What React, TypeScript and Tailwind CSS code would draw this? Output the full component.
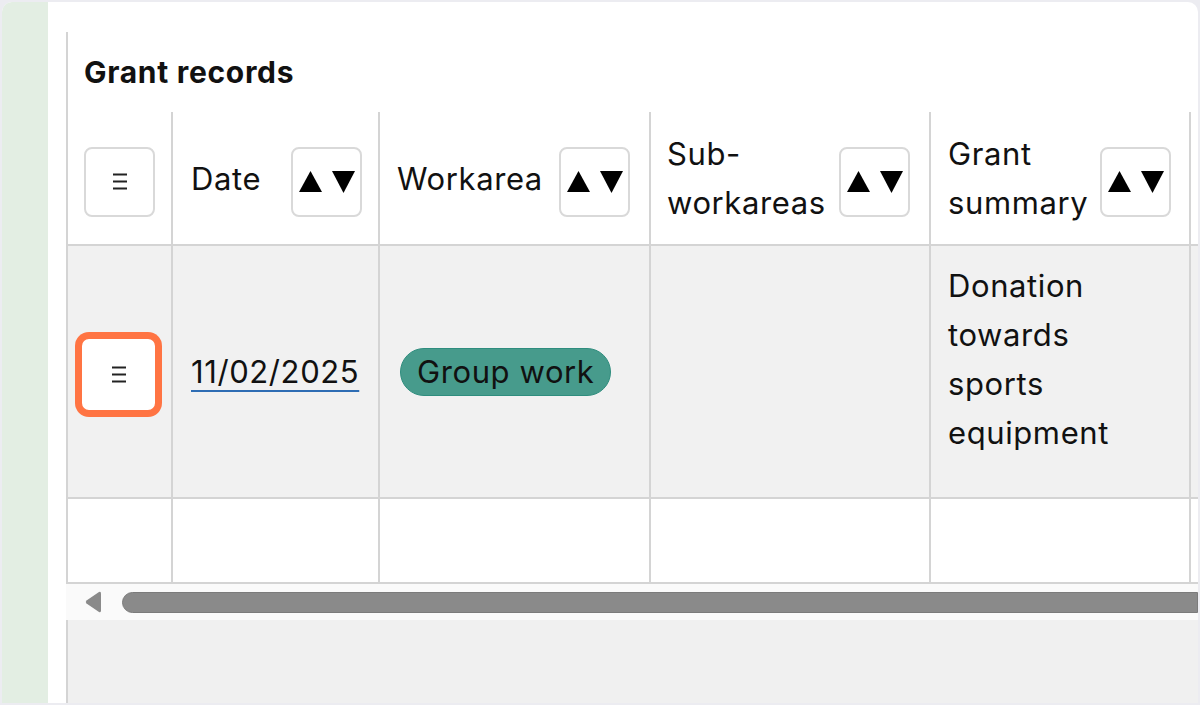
import React from 'react';

// Sort toggle: filled up/down triangles inside a bordered square
function SortButton() {
  return (
    <button
      type="button"
      className="mt-[7px] flex h-[70px] w-[71px] shrink-0 items-center justify-center rounded-[8px] border-2 border-[#d9d9d9] bg-white"
    >
      <svg width="56" height="22" viewBox="0 0 56 22" fill="#000">
        <polygon points="0,21 11.5,0 23,21" />
        <polygon points="33,0 56,0 44.5,22" />
      </svg>
    </button>
  );
}

function MenuGlyph() {
  return (
    <svg width="16" height="17" viewBox="0 0 16 17" stroke="#222" strokeWidth="2">
      <line x1="1" y1="1.5" x2="15" y2="1.5" />
      <line x1="1" y1="8.5" x2="15" y2="8.5" />
      <line x1="1" y1="15.5" x2="15" y2="15.5" />
    </svg>
  );
}

const cols = ['w-[107px] border-l-2', 'w-[207px]', 'w-[271px]', 'w-[280px]', 'w-[260px]', 'w-[260px]'];

function HeaderCell({ label, width, pad }: { label: string; width: string; pad: string }) {
  return (
    <div className={`${width} ${pad} flex shrink-0 items-center justify-between gap-[10px] border-r-2 border-[#d4d4d4]`}>
      <span className="leading-[49px]">{label}</span>
      <SortButton />
    </div>
  );
}

export default function App() {
  return (
    <div
      className="h-[705px] w-[1200px] overflow-hidden bg-[#ececf1] pl-[2px] pr-[2px] pt-[2px] pb-[2px] text-[31px] tracking-[0.6px] text-[#111]"
      style={{ fontFamily: 'Inter, "Noto Sans", sans-serif' }}
    >
      <div className="flex h-full overflow-hidden rounded-t-[10px] bg-white">
        {/* left rail */}
        <div className="w-[46px] shrink-0 bg-[#e3eee3]" />

        <div className="flex min-w-0 flex-1 flex-col pl-[18px] pt-[30px]">
          <div className="flex h-[80px] shrink-0 items-center border-l-2 border-[#d4d4d4] pl-[16px]">
            <h2 className="text-[30px] font-bold tracking-[0.7px]">Grant records</h2>
          </div>

          <div className="shrink-0 overflow-hidden">
            {/* header row */}
            <div className="flex h-[134px] w-max border-b-2 border-[#d4d4d4] bg-white">
              <div className={`${cols[0]} flex shrink-0 items-center justify-center border-r-2 border-[#d4d4d4]`}>
                <button
                  type="button"
                  className="mt-[7px] flex h-[70px] w-[71px] items-center justify-center rounded-[8px] border-2 border-[#d9d9d9] bg-white"
                >
                  <MenuGlyph />
                </button>
              </div>
              <HeaderCell label="Date" width={cols[1]} pad="pl-[18px] pr-[16px]" />
              <HeaderCell label="Workarea" width={cols[2]} pad="pl-[17px] pr-[19px]" />
              <HeaderCell label="Sub-workareas" width={cols[3]} pad="pl-[16px] pr-[19px]" />
              <HeaderCell label="Grant summary" width={cols[4]} pad="pl-[17px] pr-[18px]" />
              <div className={`${cols[5]} shrink-0 border-r-2 border-[#d4d4d4]`} />
            </div>

            {/* data row */}
            <div className="flex h-[253px] w-max border-b-2 border-[#d4d4d4] bg-[#f1f1f1]">
              <div className={`${cols[0]} flex shrink-0 items-center justify-center border-r-2 border-[#d4d4d4] pr-[2px]`}>
                <button
                  type="button"
                  className="mt-[6px] flex h-[75px] w-[77px] items-center justify-center rounded-[9px] border-2 border-[#ff7443] bg-white shadow-[0_0_0_5px_#ff7443]"
                >
                  <MenuGlyph />
                </button>
              </div>
              <div className={`${cols[1]} flex shrink-0 items-center border-r-2 border-[#d4d4d4] pl-[18px]`}>
                <a className="leading-[49px] underline decoration-[#2e6db4] decoration-[1.5px] underline-offset-[7px]">
                  11/02/2025
                </a>
              </div>
              <div className={`${cols[2]} flex shrink-0 items-center border-r-2 border-[#d4d4d4] pl-[20px]`}>
                <span className="flex h-[48px] items-center rounded-full border border-[#2f8d7e] bg-[#479b8c] px-[16px] leading-none">
                  Group work
                </span>
              </div>
              <div className={`${cols[3]} shrink-0 border-r-2 border-[#d4d4d4]`} />
              <div className={`${cols[4]} shrink-0 border-r-2 border-[#d4d4d4] pl-[17px] pr-[40px] pt-[15px] leading-[49px]`}>
                Donation towards sports equipment
              </div>
              <div className={`${cols[5]} shrink-0 border-r-2 border-[#d4d4d4]`} />
            </div>

            {/* empty row */}
            <div className="flex h-[85px] w-max border-b-2 border-[#d4d4d4] bg-white">
              {cols.map((c, i) => (
                <div key={i} className={`${c} shrink-0 border-r-2 border-[#d4d4d4]`} />
              ))}
            </div>
          </div>

          {/* horizontal scrollbar */}
          <div className="flex h-[36px] shrink-0 items-center bg-[#fafafa] pl-[19px]">
            <svg width="17" height="22" viewBox="0 0 17 22" className="shrink-0">
              <path d="M1.5 9.6 L14 1 Q16 0 16 2.5 L16 19.5 Q16 22 14 21 L1.5 12.4 Q0 11 1.5 9.6 Z" fill="#8a8a8a" />
            </svg>
            <div className="ml-[20px] h-[21px] flex-1 rounded-l-full border border-[#7b7b7b] bg-[#8a8a8a]" />
          </div>

          <div className="flex-1 border-l-2 border-[#d4d4d4] bg-[#f0f0f0]" />
        </div>
      </div>
    </div>
  );
}
